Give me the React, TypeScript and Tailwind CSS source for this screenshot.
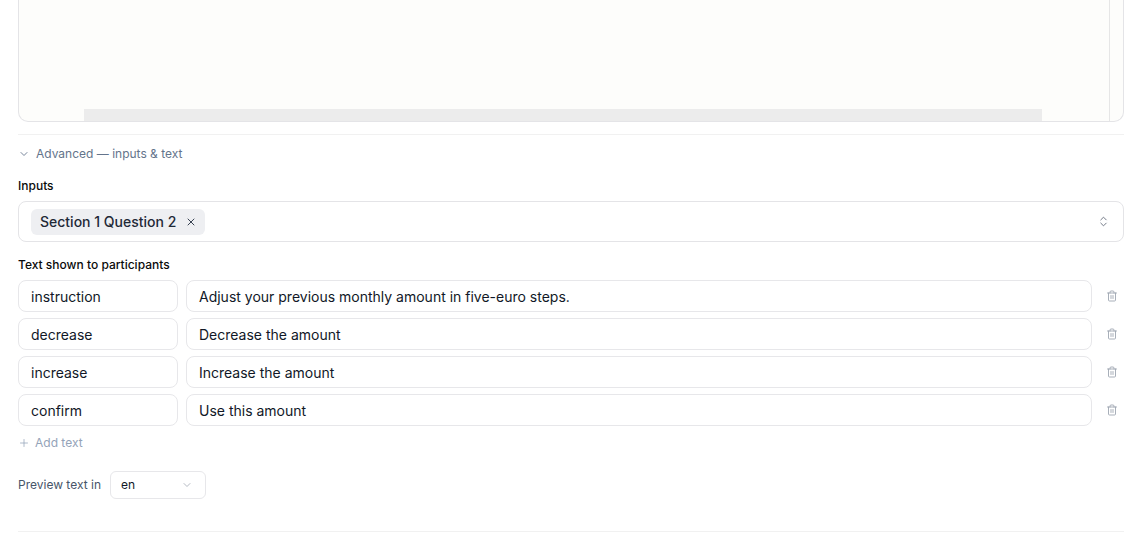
import { ChevronDown, ChevronsUpDown, Plus, Trash2, X } from "lucide-react";

const texts = [
  { key: "instruction", value: "Adjust your previous monthly amount in five-euro steps." },
  { key: "decrease", value: "Decrease the amount" },
  { key: "increase", value: "Increase the amount" },
  { key: "confirm", value: "Use this amount" },
];

export default function App() {
  return (
    <div className="min-h-screen bg-white px-[18px] font-['Inter',sans-serif] text-[#111827]">
      {/* preview frame (scrolled) */}
      <div className="flex h-[122px] rounded-b-[10px] border-x border-b border-[#e4e4e7] bg-[#fdfdfb]">
        <div className="flex flex-1 flex-col justify-end border-r border-[#e6e6e6]">
          <div className="ml-[65px] h-[12px] w-[958px] bg-[#ececec]" />
        </div>
        <div className="w-[13px]" />
      </div>

      <div className="mt-[12px] border-t border-[#f1f1f1]" />

      <button className="mt-[11px] flex h-4 items-center gap-[6px] text-[12px] text-[#64748b]">
        <ChevronDown className="h-3 w-3" strokeWidth={1.75} />
        <span>Advanced — inputs &amp; text</span>
      </button>

      <div className="mt-[16px] text-[12px] font-medium leading-4 text-[#0a0a0a]">Inputs</div>
      <div className="mt-[7px] flex h-[41px] items-center justify-between rounded-lg border border-[#e4e4e7] pl-3 pr-[13px]">
        <span className="flex h-[26px] items-center gap-[9px] rounded-md bg-[#eeeff2] pl-[9px] pr-[8px] text-[14px] font-medium text-[#1f2937]">
          Section 1 Question 2
          <X className="h-3 w-3 text-[#374151]" strokeWidth={2} />
        </span>
        <ChevronsUpDown className="h-[13px] w-[13px] text-[#6b7280]" strokeWidth={1.75} />
      </div>

      <div className="mt-[15px] text-[12px] font-medium leading-4 text-[#0a0a0a]">Text shown to participants</div>
      <div className="mt-[7px] flex flex-col gap-[6px]">
        {texts.map((t) => (
          <div key={t.key} className="flex items-center gap-2">
            <div className="flex h-8 w-[160px] items-center rounded-lg border border-[#e7e7ea] px-3 text-[14px]">
              {t.key}
            </div>
            <div className="flex h-8 flex-1 items-center rounded-lg border border-[#e7e7ea] px-3 text-[14px]">
              {t.value}
            </div>
            <button className="flex w-6 justify-center text-[#9ca3af]">
              <Trash2 className="h-3 w-3" strokeWidth={1.75} />
            </button>
          </div>
        ))}
      </div>

      <button className="mt-[9px] flex h-4 items-center gap-[5px] text-[12px] text-[#94a3b8]">
        <Plus className="h-3 w-3" strokeWidth={1.5} />
        Add text
      </button>

      <div className="mt-[20px] flex items-center gap-[9px]">
        <span className="text-[12px] text-[#475569]">Preview text in</span>
        <div className="flex h-[28px] w-[96px] items-center justify-between rounded-md border border-[#e7e7ea] pl-[10px] pr-3 text-[12px] text-[#111827]">
          en
          <ChevronDown className="h-3 w-3 text-[#9ca3af]" strokeWidth={1.5} />
        </div>
      </div>

      <div className="mt-[32px] border-t border-[#f1f1f1]" />
    </div>
  );
}
